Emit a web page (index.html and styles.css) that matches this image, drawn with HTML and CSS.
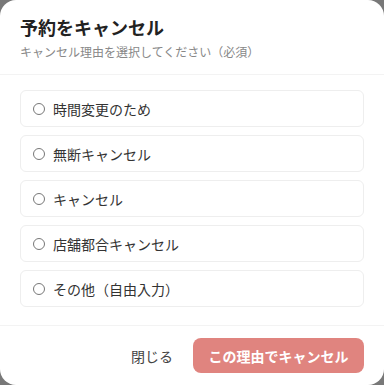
FILE: index.html
```html
<!DOCTYPE html>
<html lang="ja">
<head>
  <meta charset="UTF-8">
  <meta name="viewport" content="width=device-width, initial-scale=1.0">
  <title>予約をキャンセル</title>
  <link rel="stylesheet" href="styles.css">
</head>
<body>
  <div class="modal">
    <div class="modal-header">
      <h2>予約をキャンセル</h2>
      <p>キャンセル理由を選択してください（必須）</p>
    </div>

    <div class="modal-body">
      <label class="reason"><input type="radio" name="reason"> 時間変更のため</label>
      <label class="reason"><input type="radio" name="reason"> 無断キャンセル</label>
      <label class="reason"><input type="radio" name="reason"> キャンセル</label>
      <label class="reason"><input type="radio" name="reason"> 店舗都合キャンセル</label>
      <label class="reason"><input type="radio" name="reason"> その他（自由入力）</label>
    </div>

    <div class="modal-footer">
      <button class="close-btn">閉じる</button>
      <button class="cancel-btn" disabled>この理由でキャンセル</button>
    </div>
  </div>
</body>
</html>
```

FILE: styles.css
```css
html, body {
  margin: 0;
  height: 100%;
}
body {
  font-family: "Noto Sans CJK JP", "Noto Sans", sans-serif;
  background: #787878;
}
.modal {
  background: #fff;
  border-radius: 16px;
  height: 385px;
  display: flex;
  flex-direction: column;
  overflow: hidden;
}
.modal-header {
  padding: 14px 20px 13px;
  border-bottom: 1px solid #f3f3f3;
}
.modal-header h2 {
  margin: 0;
  font-size: 18px;
  line-height: 27px;
  font-weight: bold;
  color: #222;
}
.modal-header p {
  margin: 2px 0 0;
  font-size: 12px;
  line-height: 18px;
  color: #888;
}
.modal-body {
  padding: 15px 20px 18px;
  display: flex;
  flex-direction: column;
  gap: 8px;
  border-bottom: 1px solid #f3f3f3;
}
.reason {
  display: flex;
  align-items: center;
  gap: 8px;
  height: 35px;
  padding: 0 12px;
  border: 1px solid #eeeeee;
  border-radius: 6px;
  font-size: 14px;
  color: #333;
}
.reason input {
  appearance: none;
  margin: 0;
  width: 12px;
  height: 12px;
  border: 1px solid #777;
  border-radius: 50%;
}
.modal-footer {
  flex: 1;
  display: flex;
  justify-content: flex-end;
  align-items: center;
  gap: 12px;
  padding: 0 20px;
}
.close-btn {
  background: none;
  border: none;
  font-family: inherit;
  font-size: 14px;
  color: #444;
  padding: 8px 8px;
}
.cancel-btn {
  background: #e0847f;
  color: #fff;
  border: none;
  border-radius: 8px;
  font-family: inherit;
  font-size: 14px;
  font-weight: bold;
  width: 171px;
  height: 35px;
}
```
